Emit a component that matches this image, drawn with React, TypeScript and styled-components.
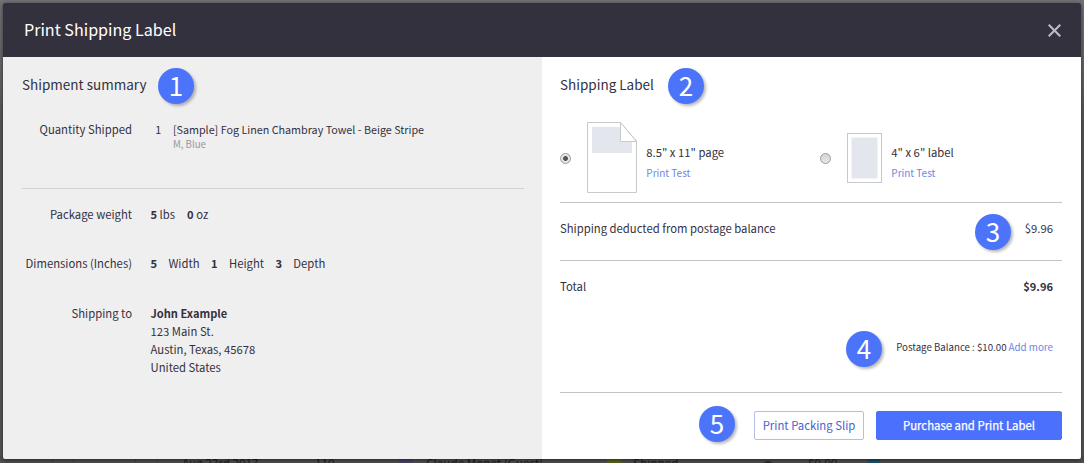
import React from "react";
import styled, { createGlobalStyle } from "styled-components";

const GlobalStyle = createGlobalStyle`
  * { box-sizing: border-box; }
  body {
    margin: 0;
    background: #59595b;
    color: #34313f;
    font-family: "Noto Sans CJK SC", "Noto Sans", sans-serif;
    font-size: 11.3px;
    line-height: 18px;
    overflow: hidden;
  }
`;

const Screen = styled.div`
  position: relative;
  height: 463px;
  padding: 3px 3px 0;
  overflow: hidden;
  background: linear-gradient(#727276 0, #68686b 60px, #58585a 120px, #555557 100%);
`;

const OrdersRow = styled.div`
  position: absolute;
  inset: 456px 0 auto 0;
  height: 20px;
  display: grid;
  grid-template-columns: 53px 21px 62px 22px 24px 133px 84px 27px 181px 26px 129px 46px 59px 1fr;
  background: #4f4f50;
  color: #1c1c1f;
  font-size: 11.7px;
  line-height: 13px;
  white-space: nowrap;
`;

const Cell = styled.span<{ $line?: boolean }>`
  border-right: ${(p) => (p.$line ? "1px solid #414143" : "0")};
`;

const Swatch = styled.span<{ $color: string; $width: number }>`
  width: ${(p) => p.$width}px;
  height: 10px;
  margin-top: 3px;
  background: ${(p) => p.$color};
`;

const Dot = styled.span`
  width: 12px;
  height: 12px;
  margin-top: 5px;
  border-radius: 50%;
  background: #2b2b2d;
`;

const Modal = styled.section`
  position: relative;
  width: 1078px;
  height: 456px;
  display: flex;
  flex-direction: column;
  border-radius: 2px;
  overflow: hidden;
  box-shadow: 0 1px 4px rgba(0, 0, 0, 0.55);
  white-space: nowrap;
`;

const Header = styled.header`
  height: 54px;
  flex: none;
  display: flex;
  align-items: center;
  justify-content: space-between;
  padding: 0 20px 0 21px;
  background: #34313f;
  color: #fff;
`;

const Title = styled.h1`
  margin: 0;
  padding-bottom: 2px;
  font-size: 16.1px;
  font-weight: 400;
  line-height: 24px;
`;

const CloseButton = styled.button`
  display: flex;
  padding: 0;
  border: 0;
  background: none;
  color: #b9bac2;
`;

const Body = styled.div`
  flex: 1;
  display: flex;
`;

const Summary = styled.div`
  width: 539px;
  padding: 15px 18px 0 19px;
  background: #efefef;
`;

const LabelPanel = styled.div`
  flex: 1;
  padding: 15px 19px 0 18px;
  background: #fff;
`;

const Heading = styled.h2`
  margin: 0;
  height: 24px;
  font-size: 13.5px;
  font-weight: 400;
  line-height: 24px;
`;

const Field = styled.div<{ $top: number }>`
  display: grid;
  grid-template-columns: 110px 1fr;
  column-gap: 18.5px;
  margin-top: ${(p) => p.$top}px;
`;

const FieldName = styled.span`
  justify-self: end;
`;

const Measures = styled.span<{ $gap: number }>`
  display: flex;
  gap: ${(p) => p.$gap}px;
`;

const Strong = styled.b`
  font-weight: 700;
  font-size: 11.1px;
`;

const Product = styled.div`
  display: grid;
  grid-template-columns: 17.6px 1fr;
  padding: 1px 0 0 4.8px;
  font-size: 10.75px;
`;

const Variant = styled.div`
  height: 9px;
  color: #97979c;
  font-size: 9.7px;
  line-height: 10px;
`;

const Rule = styled.hr<{ $top: number; $color?: string }>`
  height: 1px;
  margin: ${(p) => p.$top}px 0 0;
  border: 0;
  background: ${(p) => p.$color || "#c3c4c6"};
`;

const Formats = styled.div`
  display: flex;
  height: 72px;
  margin-top: 26px;
`;

const Format = styled.label<{ $width: number }>`
  display: flex;
  align-items: center;
  width: ${(p) => p.$width}px;
`;

const Radio = styled.span<{ $on?: boolean }>`
  width: 11px;
  height: 11px;
  margin-right: 16px;
  border: 1px solid #9b9b9b;
  border-radius: 50%;
  background: ${(p) =>
    p.$on ? "radial-gradient(circle, #555 0 2px, #e6e6e6 2.9px)" : "linear-gradient(#d5d5d5, #e6e6e6)"};
`;

const FormatText = styled.span`
  display: flex;
  flex-direction: column;
  gap: 3px;
  margin-left: 9.3px;
  padding-top: 9px;
`;

const Link = styled.a`
  color: #6d87e4;
  font-size: 10px;
`;

const Line = styled.div<{ $top: number }>`
  display: flex;
  justify-content: space-between;
  margin-top: ${(p) => p.$top}px;
  padding-right: 9px;
`;

const Balance = styled.div`
  display: flex;
  justify-content: flex-end;
  gap: 2px;
  margin-top: 43px;
  padding-right: 9px;
  font-size: 9.7px;

  ${Link} {
    font-size: 9.8px;
  }
`;

const Actions = styled.div`
  display: flex;
  justify-content: flex-end;
  gap: 12px;
  margin-top: 18px;
`;

const Button = styled.button<{ $primary?: boolean }>`
  width: ${(p) => (p.$primary ? 186 : 110)}px;
  height: 29px;
  padding: 0 0 1px;
  border: 1px solid ${(p) => (p.$primary ? "#4b71fc" : "#b3bfe8")};
  border-radius: 2px;
  background: ${(p) => (p.$primary ? "#4b71fc" : "#fff")};
  color: ${(p) => (p.$primary ? "#fff" : "#4964cf")};
  font: 400 11.35px/18px "Noto Sans CJK SC", "Noto Sans", sans-serif;
  -webkit-text-stroke: ${(p) => (p.$primary ? "0.25px #fff" : "0")};
`;

const Badge = styled.span<{ $x: number; $y: number }>`
  position: absolute;
  left: ${(p) => p.$x}px;
  top: ${(p) => p.$y}px;
  width: 36px;
  height: 36px;
  border-radius: 50%;
  background: #4b74fb;
  box-shadow: 2px 2px 3px rgba(0, 0, 0, 0.28);
  color: #fff;
  font-size: 26px;
  line-height: 34px;
  text-align: center;
`;

const badges = [
  { x: 155, y: 65 },
  { x: 665, y: 65 },
  { x: 972, y: 211 },
  { x: 843, y: 328 },
  { x: 696, y: 403 },
];

const PageIcon = () => (
  <svg width="50" height="72" viewBox="0 0 50 72" fill="none">
    <path d="M.5.5H33.5L49.5 19V70.5H.5Z" fill="#fff" stroke="#c6c9ce" />
    <path d="M5 5H33V19H45V31H5Z" fill="#e3e7ed" />
    <path d="M33.5.5V19.5H49.5Z" fill="#fff" stroke="#c6c9ce" />
  </svg>
);

const LabelIcon = () => (
  <svg width="35" height="50" viewBox="0 0 35 50">
    <rect x=".5" y=".5" width="34" height="49" fill="#fff" stroke="#c6c9ce" />
    <rect x="4.5" y="4.5" width="26" height="41" fill="#e3e7ed" />
  </svg>
);

export default function App() {
  return (
    <Screen>
      <GlobalStyle />
      <OrdersRow>
        <Cell $line />
        <Cell $line />
        <Cell $line />
        <Cell $line />
        <Cell />
        <Cell>Aug 23rd 2017</Cell>
        <Cell>110</Cell>
        <Swatch $color="#474364" $width={14} />
        <Cell>Claude Monet (Guest)</Cell>
        <Swatch $color="#57651c" $width={14} />
        <Cell>Shipped</Cell>
        <Dot />
        <Cell>$0.00</Cell>
        <Swatch $color="#1b5267" $width={13} />
      </OrdersRow>
      <Modal>
        <Header>
          <Title>Print Shipping Label</Title>
          <CloseButton aria-label="Close">
            <svg width="13" height="13" viewBox="0 0 13 13" stroke="currentColor" strokeWidth="2.1">
              <path d="M.7.7 12.3 12.3M12.3.7.7 12.3" />
            </svg>
          </CloseButton>
        </Header>
        <Body>
          <Summary>
            <Heading>Shipment summary</Heading>
            <Field $top={24}>
              <FieldName>Quantity Shipped</FieldName>
              <Product>
                <span>1</span>
                <div>
                  [Sample] Fog Linen Chambray Towel - Beige Stripe
                  <Variant>M, Blue</Variant>
                </div>
              </Product>
            </Field>
            <Rule $top={40} $color="#d0d2d4" />
            <Field $top={16}>
              <FieldName>Package weight</FieldName>
              <Measures $gap={12}>
                <span><Strong>5</Strong> lbs</span>
                <span><Strong>0</Strong> oz</span>
              </Measures>
            </Field>
            <Field $top={31}>
              <FieldName>Dimensions (Inches)</FieldName>
              <Measures $gap={11.4}>
                <Strong>5</Strong>
                <span>Width</span>
                <Strong>1</Strong>
                <span>Height</span>
                <Strong>3</Strong>
                <span>Depth</span>
              </Measures>
            </Field>
            <Field $top={32}>
              <FieldName>Shipping to</FieldName>
              <div>
                <Strong>John Example</Strong>
                <div>123 Main St.</div>
                <div>Austin, Texas, 45678</div>
                <div>United States</div>
              </div>
            </Field>
          </Summary>
          <LabelPanel>
            <Heading>Shipping Label</Heading>
            <Formats>
              <Format $width={260}>
                <Radio $on />
                <PageIcon />
                <FormatText>
                  <span>8.5" x 11" page</span>
                  <Link>Print Test</Link>
                </FormatText>
              </Format>
              <Format $width={240}>
                <Radio />
                <LabelIcon />
                <FormatText>
                  <span>4" x 6" label</span>
                  <Link>Print Test</Link>
                </FormatText>
              </Format>
            </Formats>
            <Rule $top={8} />
            <Line $top={16}>
              <span>Shipping deducted from postage balance</span>
              <span>$9.96</span>
            </Line>
            <Rule $top={23} />
            <Line $top={16}>
              <span>Total</span>
              <Strong>$9.96</Strong>
            </Line>
            <Balance>
              <span>Postage Balance : $10.00</span>
              <Link>Add more</Link>
            </Balance>
            <Rule $top={36} />
            <Actions>
              <Button>Print Packing Slip</Button>
              <Button $primary>Purchase and Print Label</Button>
            </Actions>
          </LabelPanel>
        </Body>
        {badges.map((b, i) => (
          <Badge key={i} $x={b.x} $y={b.y}>
            {i + 1}
          </Badge>
        ))}
      </Modal>
    </Screen>
  );
}
